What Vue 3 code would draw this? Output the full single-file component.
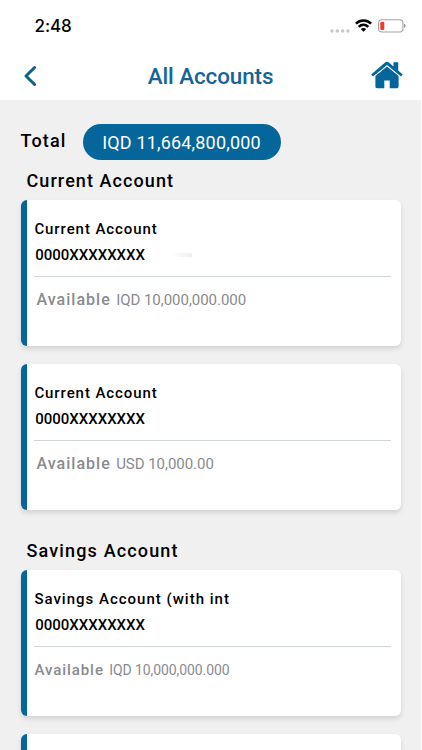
<script setup>
const groups = [
  {
    title: 'Current Account',
    accounts: [
      { name: 'Current Account', number: '0000XXXXXXXX', balance: 'IQD 10,000,000.000', smudge: true },
      { name: 'Current Account', number: '0000XXXXXXXX', balance: 'USD 10,000.00' },
    ],
  },
  {
    title: 'Savings Account',
    accounts: [
      { name: 'Savings Account (with int', number: '0000XXXXXXXX', balance: 'IQD 10,000,000.000', compact: true },
      { name: '', number: '', balance: '' },
    ],
  },
]
</script>

<template>
  <div class="screen">
    <div class="status">
      <span class="time">2:48</span>
      <div class="indicators">
        <svg class="dots" width="20" height="4" viewBox="0 0 20 4" fill="#c9c9c9">
          <circle cx="2" cy="2" r="1.8" /><circle cx="7.3" cy="2" r="1.8" />
          <circle cx="12.6" cy="2" r="1.8" /><circle cx="17.9" cy="2" r="1.8" />
        </svg>
        <svg class="wifi" width="17" height="13" viewBox="0 0 17 13">
          <g fill="none" stroke="#000" stroke-width="2.5">
            <path d="M.9 4.7Q4.2 1.6 8.5 1.6T16.1 4.7" />
            <path d="M3.7 7.8Q5.8 5.8 8.5 5.8T13.3 7.8" />
          </g>
          <path d="M5.8 10Q8.5 7.9 11.2 10L8.5 12.8Z" />
        </svg>
        <svg class="battery" width="28" height="14" viewBox="0 0 28 14">
          <rect x=".6" y=".8" width="24.3" height="12.2" rx="3.2" fill="#fff" stroke="#a3a3a3" stroke-width="1.1" />
          <rect x="2.3" y="2.7" width="4" height="8.4" rx="1.3" fill="#f4392f" />
          <path d="M26 4.8Q27.6 5.3 27.6 6.8T26 8.8Z" fill="#8c8c8c" />
        </svg>
      </div>
    </div>
    <header class="bar">
      <svg class="back" width="14" height="22" viewBox="0 0 14 22">
        <path d="M11.6 2.5L3 11L11.6 19.5" fill="none" stroke="#0b6285" stroke-width="3" stroke-linecap="round" stroke-linejoin="round" />
      </svg>
      <h1>All Accounts</h1>
      <svg class="home" width="34" height="28" viewBox="0 0 34 28" fill="#04669a">
        <path d="M17 .8Q18.2 .8 19.2 1.7L23.5 5.4V1.2H28.2V9.5L32.7 13.4L31 15.6L17 3.9L3 15.6L1.2 13.4L14.8 1.7Q15.8 .8 17 .8Z" />
        <path d="M17 5.5L28.6 15V25.5Q28.6 27.2 26.9 27.2H19.7V19.5H14.3V27.2H7.1Q5.4 27.2 5.4 25.5V15Z" />
      </svg>
    </header>
    <main>
      <div class="total">
        <span class="total-label">Total</span>
        <span class="pill">IQD 11,664,800,000</span>
      </div>
      <section v-for="group in groups" :key="group.title">
        <h2>{{ group.title }}</h2>
        <article v-for="(account, i) in group.accounts" :key="i" class="card" :class="{ narrow: account.compact }">
          <h3>{{ account.name }}</h3>
          <div class="number">
            <span>{{ account.number }}</span>
            <i v-if="account.smudge" class="smudge"></i>
          </div>
          <div class="available" :class="{ compact: account.compact }">
            <template v-if="account.balance">
              <b>Available</b><span>{{ account.balance }}</span>
            </template>
          </div>
        </article>
      </section>
    </main>
  </div>
</template>

<style>
body { background: #fff; overflow: hidden; }
</style>

<style scoped>
.screen {
  box-sizing: border-box;
  width: 422px;
  height: 750px;
  overflow: hidden;
  background: #fff;
  font-family: Roboto, "Liberation Sans", sans-serif;
  color: #000;
  white-space: nowrap;
}
h1, h2, h3 { margin: 0; font-weight: 500; }
svg { display: block; flex: none; }
.status {
  display: flex;
  justify-content: space-between;
  height: 52px;
  padding: 0 16px 0 34.5px;
  box-sizing: border-box;
}
.time {
  font: 500 17px/20px Inter, sans-serif;
  letter-spacing: -.1px;
  padding-top: 16px;
}
.indicators { display: flex; align-items: flex-start; }
.dots { margin: 28.5px 5px 0 0; }
.wifi { margin: 19px 6px 0 0; }
.battery { margin-top: 19px; }
.bar {
  display: flex;
  align-items: center;
  justify-content: space-between;
  height: 48px;
  padding: 0 18px 0 23px;
  box-sizing: border-box;
  color: #15659a;
}
h1 { font-size: 22.4px; line-height: 49px; letter-spacing: -.08px; margin-left: 14px; }
.home { margin-top: -3px; }
main {
  width: 421px;
  height: 650px;
  padding: 23.5px 20.5px 0 21.2px;
  box-sizing: border-box;
  background: #f0f0f0;
  overflow: hidden;
}
.total { display: flex; height: 36.5px; }
.total-label {
  width: 62px;
  margin-left: -.7px;
  font-weight: 500;
  font-size: 18px;
  line-height: 34px;
  letter-spacing: 1.15px;
}
.pill {
  width: 198px;
  border-radius: 19px;
  background: #04669a;
  color: #fff;
  font-size: 18px;
  line-height: 38px;
  letter-spacing: .17px;
  text-align: center;
}
h2 {
  height: 40px;
  padding-left: 5.3px;
  font-size: 18px;
  line-height: 42px;
  letter-spacing: 1.08px;
}
section + section h2 { height: 42px; line-height: 45px; letter-spacing: 1.15px; }
.card {
  height: 146px;
  margin-bottom: 18px;
  padding: 19px 9.5px 0 7.2px;
  box-sizing: border-box;
  border-left: 6px solid #04669a;
  border-radius: 6px;
  background: #fff;
  box-shadow: 0 3px 5px rgba(0, 0, 0, .12);
}
h3 { height: 20px; font-size: 15px; line-height: 20px; letter-spacing: .92px; }
.narrow h3 { letter-spacing: 1px; }
.number {
  display: flex;
  align-items: center;
  height: 38px;
  padding: 0 0 0 .8px;
  box-sizing: border-box;
  border-bottom: 1.5px solid #d0d5d7;
  font-weight: 500;
  font-size: 15px;
  line-height: 32px;
}
.number span { height: 37px; }
.smudge {
  width: 20px;
  height: 4px;
  margin: -6px 0 0 27px;
  background: linear-gradient(90deg, #fff, #eee);
  filter: blur(.7px);
}
.available {
  display: flex;
  gap: 5.3px;
  padding: 12px 0 0 2px;
  line-height: 22px;
  color: #898b8e;
  font-size: 15px;
}
.available span { letter-spacing: -.03px; }
.available b { font-weight: 500; font-size: 16px; letter-spacing: 1.04px; }
.compact { padding-left: 0; font-size: 14px; }
.compact span { letter-spacing: -.08px; }
.compact b { font-size: 15px; letter-spacing: .94px; }
</style>
